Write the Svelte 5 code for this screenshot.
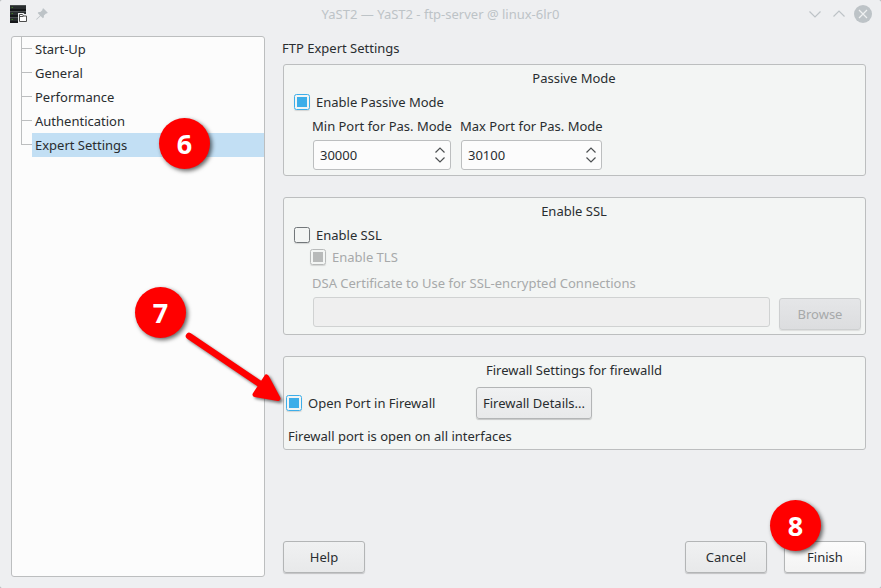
<script>
  const items = ['Start-Up', 'General', 'Performance', 'Authentication', 'Expert Settings'];
  let selected = $state(4);
  let passive = $state(true);
  let ssl = $state(false);
  let tls = $state(true);
  let open = $state(true);
</script>

{#snippet check(on, disabled = false)}
  <span class="box" class:on class:disabled></span>
{/snippet}

{#snippet spin(value)}
  <div class="spin">
    <span>{value}</span>
    <svg width="12" height="20" viewBox="0 0 12 20"><path d="M1.500 7.500 6 3l4.500 4.500M1.500 12.500 6 17l4.500-4.500" /></svg>
  </div>
{/snippet}

<div class="window">
  <header>
    <svg class="app" width="18" height="20" viewBox="0 0 18 20">
      <rect x="0" y="0" width="16" height="18" fill="#151719" />
      <path d="M0 .5h16M0 6.500h16M0 12.500h16" stroke="#4a4f50" />
      <path d="M0 2.500h16M0 8.500h16M0 14.500h16" stroke="#292d2f" stroke-width="3" />
      <path d="M1.500 2.500h1.500M1.500 8.500h1.500M1.500 14.500h1.500" stroke="#3f7a22" />
      <path d="M8 8h5.500l1 1H18v9H8z" fill="#eff0f1" />
      <path d="M9.500 16.500v-7h3l1 1.500h3v5.500zM9.500 11.500h4" fill="#fcfcfc" stroke="#4d4d4d" />
    </svg>
    <svg class="pin" width="12" height="12" viewBox="0 0 12 12">
      <path d="M7.300.2 11.800 4.700 10.900 5.600 10 5.500 7.900 7.600 7.900 9.300 6.900 10.300 4.600 8 .7 11.800.1 11.200 4 7.400 1.700 5.100 2.700 4.100 4.400 4.100 6.500 2 6.400 1.100z" fill="#bdc3c7" />
    </svg>
    <span class="title">YaST2 — YaST2 - ftp-server @ linux-6lr0</span>
    <svg class="controls" width="64" height="20" viewBox="0 0 64 20">
      <path d="m1.500 6.500 5.500 5.500 5.500-5.500M25.500 11.500l5.500-5.500 5.500 5.500" fill="none" stroke="#bdc3c7" stroke-width="1.200" />
      <circle cx="55" cy="9" r="9" fill="#bdc3c7" />
      <path d="m51 5 8 8m0-8-8 8" stroke="#eff0f1" stroke-width="1.200" />
    </svg>
  </header>

  <main>
    <nav>
      {#each items as item, i}
        <div class="item" class:last={i === items.length - 1}>
          <i></i>
          <button class="entry" class:selected={selected === i} onclick={() => (selected = i)}>{item}</button>
        </div>
      {/each}
    </nav>

    <div class="content">
      <div class="heading">FTP Expert Settings</div>

      <section class="passive">
        <h2>Passive Mode</h2>
        <button class="check" onclick={() => (passive = !passive)}>{@render check(passive)}Enable Passive Mode</button>
        <div class="ports">
          <div class="min"><div class="label">Min Port for Pas. Mode</div>{@render spin('30000')}</div>
          <div class="max"><div class="label">Max Port for Pas. Mode</div>{@render spin('30100')}</div>
        </div>
      </section>

      <section class="ssl">
        <h2>Enable SSL</h2>
        <button class="check" onclick={() => (ssl = !ssl)}>{@render check(ssl)}Enable SSL</button>
        <div class="check tls">{@render check(tls, true)}Enable TLS</div>
        <div class="certlabel">DSA Certificate to Use for SSL-encrypted Connections</div>
        <div class="cert">
          <div class="field"></div>
          <button class="btn browse" disabled>Browse</button>
        </div>
      </section>

      <section class="firewall">
        <h2>Firewall Settings for firewalld</h2>
        <div class="fwrow">
          <button class="check" onclick={() => (open = !open)}>{@render check(open)}Open Port in Firewall</button>
          <button class="btn details">Firewall Details...</button>
        </div>
        <div class="status">Firewall port is open on all interfaces</div>
      </section>

      <footer>
        <button class="btn help">Help</button>
        <button class="btn">Cancel</button>
        <button class="btn finish">Finish</button>
      </footer>
    </div>
  </main>

  <div class="badge six">6</div>
  <div class="badge seven">7</div>
  <div class="badge eight">8</div>
  <svg class="arrow" width="110" height="85" viewBox="0 0 110 85">
    <path d="M9 11 83 61" stroke="#f00" stroke-width="6.500" stroke-linecap="round" />
    <path d="M86.500 52 98 73.500 75 69.500z" fill="#f00" stroke="#f00" stroke-width="5" stroke-linejoin="round" />
  </svg>
</div>

<style>
  :global(body) { margin: 0; overflow: hidden; background: #a9adb0; }
  * { box-sizing: border-box; }
  .window {
    position: relative; width: 881px; height: 588px; overflow: hidden;
    background: #eeeff1; color: #292d30; border-radius: 2px;
    font: 13px/18px "Noto Sans", sans-serif;
    display: flex; flex-direction: column;
  }
  button { font: inherit; color: inherit; border: 0; background: none; padding: 0; margin: 0; text-align: left; }
  header { height: 36px; flex: none; display: flex; align-items: flex-start; padding: 5px 9px 0 10px; color: #bdc3c7; }
  .pin { margin: 3px 0 0 8px; }
  .app { flex: none; }
  .title { flex: 1; text-align: center; padding-left: 25px; }
  .controls { flex: none; }
  main { flex: 1; display: flex; padding: 0 15px 11px 11px; }
  nav { width: 254px; border: 1px solid #bcbebf; border-radius: 3px; background: #fcfcfc; }
  .item { height: 24px; display: flex; position: relative; padding-left: 9px; }
  .item i { width: 11px; height: 24px; border-left: 1px solid #bcbebf; background: linear-gradient(#bcbebf, #bcbebf) 0 11px / 11px 1px no-repeat; }
  .item.last i { height: 12px; }
  .entry { flex: 1; height: 24px; padding: 0 3px; }
  .selected { background: #c2dff4; }
  .content { width: 583px; margin-left: 18px; display: flex; flex-direction: column; }
  .heading { height: 28px; padding-top: 3px; margin-left: -1px; }
  section { flex: none; border: 1px solid #bcbebf; border-radius: 3px; background: #f3f5f4; display: flex; flex-direction: column; align-items: flex-start; }
  h2 { font: inherit; margin: 4px 0 0; padding-right: 1px; align-self: stretch; text-align: center; }
  .passive { height: 112px; }
  .ssl { height: 138px; margin-top: 21px; }
  .firewall { height: 94px; margin-top: 21px; }
  .check { display: flex; align-items: center; gap: 6px; height: 18px; margin: 6px 0 0 10px; }
  .box { width: 16px; height: 16px; border: 1px solid #72777a; border-radius: 2.500px; padding: 2px; box-shadow: 0 1px 1px #0002; flex: none; }
  .box.on { border-color: #3daee9; }
  .box.on::before { content: ""; display: block; width: 10px; height: 10px; background: #3daee9; }
  .box.disabled { border-color: #b8baba; }
  .box.disabled::before { background: #b8baba; }
  .ports { display: flex; margin: 6px 0 0 29px; gap: 10px; }
  .min { width: 138px; }
  .max { width: 141px; }
  .label { white-space: nowrap; margin: 0 0 5px -1px; height: 18px; letter-spacing: -.01px; }
  .spin { height: 30px; border: 1px solid #bcbebf; border-radius: 3px; background: #fcfcfc; display: flex; align-items: center; justify-content: space-between; padding: 0 4px 0 6px; }
  .spin svg { fill: none; stroke: #4d5052; stroke-width: 1.200; }
  .tls { margin: 4px 0 0 26px; color: #a7a9aa; }
  .certlabel { margin: 8px 0 0 28px; color: #a7a9aa; }
  .cert { display: flex; align-items: flex-start; margin: 5px 0 0 29px; }
  .field { width: 457px; height: 30px; border: 1px solid #d0d2d2; border-radius: 3px; background: #efefef; }
  .btn { width: 82px; height: 32px; border: 1px solid #b3b5b6; border-radius: 3px; background: linear-gradient(#f0f1f2, #e8e9ea); box-shadow: 0 1px 1px #00000030; text-align: center; flex: none; }
  .browse { margin: 1px 0 0 9px; border-color: #cdcfd0; background: linear-gradient(#e5e6e8, #dcdddf); color: #a7a9aa; box-shadow: 0 1px 1px #00000018; }
  .fwrow { display: flex; align-items: center; margin: 8px 0 0 2px; height: 32px; }
  .fwrow .check { margin: 0; width: 190px; }
  .details { width: 116px; }
  .status { margin: 8px 0 0 4px; }
  footer { display: flex; gap: 17px; margin-top: auto; margin-bottom: 4px; }
  .help { margin-right: auto; }
  .finish { background: linear-gradient(#fcfcfc, #f3f3f3); }
  .badge { position: absolute; width: 51px; height: 51px; border-radius: 50%; background: #f00; color: #fff; font-size: 27px; font-weight: 700; line-height: 51px; text-align: center; box-shadow: 2px 2px 4px #0009; }
  .six { left: 159px; top: 118px; }
  .seven { left: 135px; top: 287px; }
  .eight { left: 770px; top: 500px; }
  .arrow { position: absolute; left: 180px; top: 325px; filter: drop-shadow(2px 2px 1.500px #0008); }
</style>
